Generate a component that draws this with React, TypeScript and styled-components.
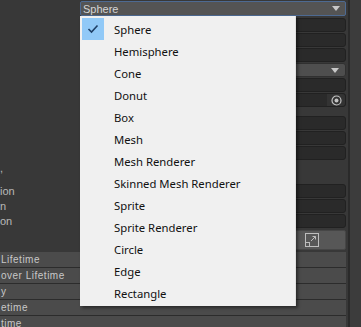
import React from "react";
import styled, { createGlobalStyle } from "styled-components";

const GlobalStyle = createGlobalStyle`
    html, body {
        margin: 0;
        padding: 0;
        background: #383838;
    }
`;

const shapes = [
    "Sphere",
    "Hemisphere",
    "Cone",
    "Donut",
    "Box",
    "Mesh",
    "Mesh Renderer",
    "Skinned Mesh Renderer",
    "Sprite",
    "Sprite Renderer",
    "Circle",
    "Edge",
    "Rectangle",
];

const modules = ["Lifetime", "over Lifetime", "y", "etime", "time"];

type RowSpec = { kind: "field" | "popup" | "object" | "blank"; label?: string; height?: number };

const rows: RowSpec[] = [
    { kind: "field" },
    { kind: "field" },
    { kind: "field" },
    { kind: "popup" },
    { kind: "field" },
    { kind: "object" },
    { kind: "blank", height: 7 },
    { kind: "field" },
    { kind: "field" },
    { kind: "field" },
    { kind: "blank", height: 22, label: "," },
    { kind: "field", label: "ion" },
    { kind: "field", label: "n" },
    { kind: "field", label: "on" },
];

const Arrow = () => (
    <svg width="8" height="5" viewBox="0 0 8 5">
        <path d="M0 0 L8 0 L4 5 Z" fill="#c8c8c8" />
    </svg>
);

const App = () => {
    return (
        <Screen>
            <GlobalStyle />
            <Inspector>
                <TopRow>
                    <Label />
                    <ShapePopup>
                        <span>Sphere</span>
                        <Arrow />
                    </ShapePopup>
                </TopRow>
                {rows.map((r, i) =>
                    r.kind === "blank" ? (
                        <Row key={i} style={{ height: r.height }}>
                            <Label>{r.label}</Label>
                        </Row>
                    ) : (
                        <Row key={i}>
                            <Label>{r.label}</Label>
                            <Field kind={r.kind}>
                                {r.kind === "popup" && <Arrow />}
                                {r.kind === "object" && (
                                    <Picker>
                                        <svg width="11" height="11" viewBox="0 0 11 11">
                                            <circle cx="5.5" cy="5.5" r="4.5" fill="none" stroke="#c4c4c4" strokeWidth="1.2" />
                                            <circle cx="5.5" cy="5.5" r="2" fill="#c4c4c4" />
                                        </svg>
                                    </Picker>
                                )}
                            </Field>
                        </Row>
                    )
                )}
                <ButtonRow>
                    <ToolButton>
                        <svg width="14" height="14" viewBox="0 0 14 14">
                            <rect x="0.5" y="0.5" width="13" height="13" fill="none" stroke="#bdbdbd" />
                            <rect x="0.5" y="9.5" width="4" height="4" fill="none" stroke="#bdbdbd" />
                            <path d="M6 8 L10.5 3.5 M7.5 3.5 L10.5 3.5 L10.5 6.5" fill="none" stroke="#bdbdbd" />
                        </svg>
                    </ToolButton>
                </ButtonRow>
                <Modules>
                    {modules.map((m) => (
                        <ModuleHeader key={m}>{m}</ModuleHeader>
                    ))}
                </Modules>
            </Inspector>
            <Scrollbar />
            <Menu>
                {shapes.map((s, i) => (
                    <MenuItem key={s}>
                        <Check checked={i === 0}>
                            {i === 0 && (
                                <svg width="12" height="10" viewBox="0 0 12 10">
                                    <path d="M1.5 5 L4.5 8 L10.5 1.5" fill="none" stroke="#1e3f66" strokeWidth="1.6" />
                                </svg>
                            )}
                        </Check>
                        <ItemText>{s}</ItemText>
                    </MenuItem>
                ))}
            </Menu>
        </Screen>
    );
};

const Screen = styled.div`
    position: relative;
    width: 361px;
    height: 327px;
    overflow: hidden;
    display: flex;
    background: #383838;
    font-family: "Liberation Sans", Arial, sans-serif;
`;
const Inspector = styled.div`
    flex: 1;
    display: flex;
    flex-direction: column;
    padding-top: 1px;
    padding-right: 2px;
    overflow: hidden;
    & > * {
        flex-shrink: 0;
    }
`;
const TopRow = styled.div`
    display: flex;
    height: 15px;
    margin-bottom: 2px;
`;
const Row = styled.div`
    display: flex;
    align-items: stretch;
    height: 14px;
    margin-bottom: 1px;
`;
const Label = styled.div`
    width: 80px;
    flex: none;
    color: #b8b8b8;
    font-size: 11px;
    line-height: 14px;
    white-space: nowrap;
`;
const ShapePopup = styled.div`
    flex: 1;
    display: flex;
    align-items: center;
    justify-content: space-between;
    box-sizing: border-box;
    padding: 0 5px 0 2px;
    background: #545454;
    border: 1px solid #4d6a92;
    border-radius: 2px;
    color: #d4d4d4;
    font-size: 11px;
`;
const Field = styled.div<{ kind: string }>`
    flex: 1;
    display: flex;
    align-items: center;
    justify-content: flex-end;
    box-sizing: border-box;
    margin-left: 80px;
    padding-right: ${(p) => (p.kind === "popup" ? "6px" : "0")};
    background: ${(p) => (p.kind === "popup" ? "#4e4e4e" : "#2a2a2a")};
    border: 1px solid ${(p) => (p.kind === "popup" ? "#303030" : "#212121")};
    border-radius: 3px;
`;
const Picker = styled.div`
    width: 18px;
    height: 100%;
    display: flex;
    align-items: center;
    justify-content: center;
    background: #333333;
    border-radius: 0 3px 3px 0;
`;
const ButtonRow = styled.div`
    display: flex;
    justify-content: flex-end;
    height: 20px;
    margin-top: 1px;
`;
const ToolButton = styled.div`
    width: 130px;
    display: flex;
    align-items: center;
    justify-content: flex-end;
    padding-right: 26px;
    box-sizing: border-box;
    background: #575757;
    border: 1px solid #464646;
    border-radius: 2px;
`;
const Modules = styled.div`
    display: flex;
    flex-direction: column;
    margin-top: 2px;
`;
const ModuleHeader = styled.div`
    flex: none;
    height: 15px;
    line-height: 15px;
    background: #4b4b4b;
    border-bottom: 1px solid #2c2c2c;
    color: #c8c8c8;
    font-size: 10px;
    letter-spacing: 0.5px;
    padding-left: 1px;
    white-space: nowrap;
`;
const Scrollbar = styled.div`
    width: 11px;
    flex: none;
    background: #3c3c3c;
    border-left: 2px solid #2a2a2a;
`;
const Menu = styled.div`
    position: absolute;
    left: 80px;
    top: 16px;
    width: 216px;
    box-sizing: border-box;
    padding: 2px 1px 2px 2px;
    background: #f0f0f0;
    border-right: 1px solid #e0e0e0;
    box-shadow: 2px 2px 3px rgba(0, 0, 0, 0.45);
    display: flex;
    flex-direction: column;
    font-family: "Noto Sans", "Noto Sans CJK KR", sans-serif;
`;
const MenuItem = styled.div`
    display: flex;
    align-items: center;
    height: 22px;
`;
const Check = styled.div<{ checked: boolean }>`
    width: 22px;
    height: 22px;
    display: flex;
    align-items: center;
    justify-content: center;
    background: ${(p) => (p.checked ? "#91c9f7" : "transparent")};
`;
const ItemText = styled.span`
    margin-left: 10px;
    font-size: 11.3px;
    color: #111111;
`;

export default App;
